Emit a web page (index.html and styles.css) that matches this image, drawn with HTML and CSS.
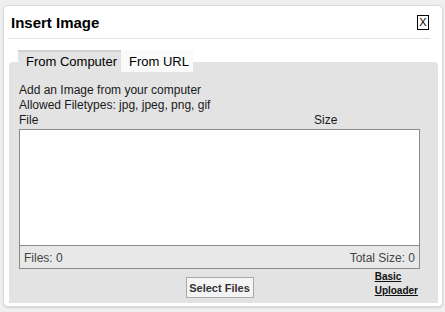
FILE: index.html
```html
<!DOCTYPE html>
<html>
<head>
<meta charset="utf-8">
<link rel="stylesheet" href="styles.css">
</head>
<body>
<div class="dialog">
  <div class="header">
    <div class="title">Insert Image</div>
    <div class="close">X</div>
  </div>
  <div class="tabs">
    <div class="tab active">From Computer</div>
    <div class="tab">From URL</div>
  </div>
  <div class="panel">
    <div class="line">Add an Image from your computer</div>
    <div class="line">Allowed Filetypes: jpg, jpeg, png, gif</div>
    <div class="cols line"><span class="c-file">File</span><span class="c-size">Size</span></div>
    <div class="list">
      <div class="list-body"></div>
      <div class="list-foot"><span>Files: 0</span><span>Total Size: 0</span></div>
    </div>
    <div class="actions">
      <span></span>
      <button class="btn">Select Files</button>
      <a class="basic" href="#">Basic<br>Uploader</a>
    </div>
  </div>
</div>
</body>
</html>
```
FILE: styles.css
```css
html, body {
  margin: 0;
  padding: 0;
}
body {
  background: #efefef;
  font-family: "Liberation Sans", Arial, sans-serif;
  font-size: 12px;
  color: #222;
  width: 445px;
  height: 312px;
  overflow: hidden;
}
.dialog {
  box-sizing: border-box;
  margin: 5px 0 0 3px;
  width: 440px;
  height: 302px;
  background: #fff;
  border: 1px solid #dcdcdc;
  border-radius: 5px;
  box-shadow: 0 1px 2px rgba(0,0,0,0.12);
}
.header {
  display: flex;
  align-items: center;
  justify-content: space-between;
  height: 32px;
  margin: 0 12px 0 4px;
  padding: 0 1px 0 3px;
  border-bottom: 1px solid #e2e2e2;
}
.title {
  font-size: 15px;
  font-weight: bold;
  color: #000;
}
.close {
  box-sizing: border-box;
  width: 12px;
  height: 15px;
  border: 1px solid #000;
  font-size: 11px;
  line-height: 13px;
  text-align: center;
  color: #000;
}
.tabs {
  display: flex;
  margin: 11px 0 0 14px;
  position: relative;
  z-index: 1;
}
.tab {
  box-sizing: border-box;
  height: 22px;
  line-height: 20px;
  font-size: 13px;
  padding: 0 8px;
  white-space: nowrap;
  background: #fafafa;
  color: #000;
}
.tab.active {
  width: 103px;
  background: #e3e3e3;
  border-top: 2px solid #d2d2d2;
}
.tab:not(.active) {
  width: 72px;
  padding-top: 2px;
}
.panel {
  box-sizing: border-box;
  margin: -10px 0 0 5px;
  width: 429px;
  height: 241px;
  background: #e3e3e3;
  border-radius: 4px 4px 0 0;
  padding: 21px 0 0 10px;
}
.line {
  line-height: 15px;
  color: #1a1a1a;
}
.cols {
  display: flex;
  width: 401px;
}
.c-file {
  flex: 1;
}
.c-size {
  width: 106px;
}
.list {
  box-sizing: border-box;
  margin-top: 1px;
  width: 401px;
  height: 140px;
  border: 1px solid #8a8a8a;
  display: flex;
  flex-direction: column;
}
.list-body {
  height: 115px;
  background: #fff;
  border-bottom: 1px solid #8a8a8a;
}
.list-foot {
  flex: 1;
  display: flex;
  justify-content: space-between;
  align-items: center;
  padding: 1px 4px 0 4px;
  background: #e8e8e8;
  color: #444;
}
.actions {
  width: 401px;
  display: grid;
  grid-template-columns: 1fr auto 1fr;
  align-items: start;
  margin-top: 1px;
}
.btn {
  margin-top: 7px;
  box-sizing: border-box;
  width: 68px;
  height: 21px;
  padding: 0;
  font-family: "Liberation Sans", Arial, sans-serif;
  font-size: 11px;
  font-weight: bold;
  color: #333;
  background: #f4f4f4;
  border: 1px solid #aaa;
  border-radius: 0;
}
.basic {
  justify-self: end;
  margin-right: 2px;
  font-size: 10px;
  font-weight: bold;
  line-height: 14px;
  color: #111;
  text-decoration: underline;
}
```
